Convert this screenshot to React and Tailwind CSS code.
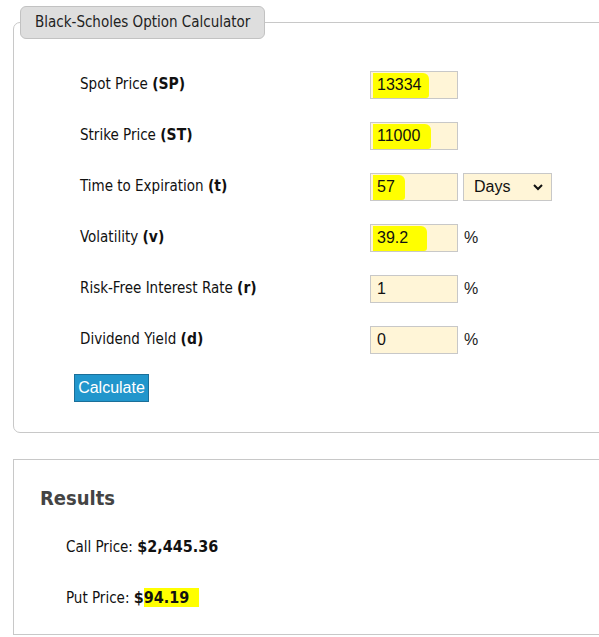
const label = "font-['DejaVu_Sans_Condensed','DejaVu_Sans',sans-serif]";
const arial = "font-['Liberation_Sans',Arial,sans-serif]";

const rows = [
  { name: "Spot Price", sym: "SP", value: "13334", mark: "w-[56px]" },
  { name: "Strike Price", sym: "ST", value: "11000", mark: "w-[58px]" },
  { name: "Time to Expiration", sym: "t", value: "57", mark: "w-[32px]", days: true },
  { name: "Volatility", sym: "v", value: "39.2", mark: "w-[54px]", pct: true },
  { name: "Risk-Free Interest Rate", sym: "r", value: "1", pct: true },
  { name: "Dividend Yield", sym: "d", value: "0", pct: true },
];

function Field({ value, mark }) {
  return (
    <div className={`relative w-[88px] h-[28px] bg-[#fff5d7] border border-[#c8c8c8] ${arial} text-[16px] text-[#111] flex items-center pl-[6px]`}>
      {mark && <span className={`absolute left-[2px] top-[1px] h-[25px] ${mark} bg-[#ffff00] rounded-tr-[6px] rounded-br-[3px]`}></span>}
      <span className="relative">{value}</span>
    </div>
  );
}

export default function App() {
  return (
    <div className="w-[599px] h-[637px] overflow-hidden bg-white relative">
      <fieldset className="ml-[13px] mt-[6px] w-[620px] h-[427px] border border-[#c8c8c8] rounded-[7px] px-0 pt-0">
        <legend className={`ml-[6px] h-[33px] px-[14px] bg-[#dedede] border border-[#c2c2c2] rounded-[6px] ${label} text-[15px] text-[#222] flex items-center`}>
          Black-Scholes Option Calculator
        </legend>
        <div className="pt-[32px] flex flex-col gap-[23px]">
          {rows.map((r) => (
            <div key={r.name} className="flex items-center">
              <div className={`w-[356px] pl-[66px] ${label} text-[15px] text-[#111]`}>
                {r.name} <b className="text-[15.5px]">({r.sym})</b>
              </div>
              <Field value={r.value} mark={r.mark} />
              {r.days && (
                <div className={`ml-[5px] w-[89px] h-[28px] bg-[#fff5d7] border border-[#c8c8c8] ${arial} text-[16px] text-[#111] flex items-center justify-between pl-[10px] pr-[7px]`}>
                  <span>Days</span>
                  <svg width="12" height="12" viewBox="0 0 12 12"><path d="M2 4 L6 8 L10 4" fill="none" stroke="#111" strokeWidth="2" /></svg>
                </div>
              )}
              {r.pct && <span className={`ml-[6px] ${arial} text-[16px] text-[#222]`}>%</span>}
            </div>
          ))}
        </div>
        <button className={`ml-[60px] mt-[20px] w-[75px] h-[28px] bg-[#2196cc] border border-[#1b6f99] text-white ${arial} text-[16px]`}>
          Calculate
        </button>
      </fieldset>
      <div className="ml-[13px] mt-[26px] w-[620px] h-[176px] border border-[#c8c8c8] pl-[26px] pt-[23px]">
        <h2 className={`${label} font-bold text-[20px] text-[#444]`}>Results</h2>
        <div className={`mt-[22px] ml-[26px] ${label} text-[15px] text-[#111]`}>
          Call Price: <b className="text-[16px]">$2,445.36</b>
        </div>
        <div className={`mt-[27px] ml-[26px] ${label} text-[15px] text-[#111]`}>
          Put Price: <b className="text-[16px]">$<span className="bg-[#ffff00] pr-[10px]">94.19</span></b>
        </div>
      </div>
    </div>
  );
}
